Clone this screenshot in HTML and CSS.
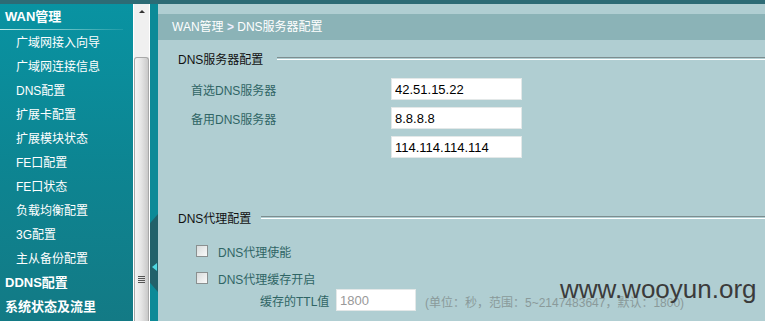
FILE: index.html
```html
<!DOCTYPE html>
<html>
<head>
  <title>DNS服务器配置</title>
  <meta name="viewport" content="width=device-width, initial-scale=1.0">
  <link rel="stylesheet" href="styles.css">
</head>
<body>
  <div class="topbar"></div>
  <div class="main">
    <div class="sidebar">
      <div class="group">WAN管理</div>
      <a class="item">广域网接入向导</a>
      <a class="item">广域网连接信息</a>
      <a class="item">DNS配置</a>
      <a class="item">扩展卡配置</a>
      <a class="item">扩展模块状态</a>
      <a class="item">FE口配置</a>
      <a class="item">FE口状态</a>
      <a class="item">负载均衡配置</a>
      <a class="item">3G配置</a>
      <a class="item">主从备份配置</a>
      <div class="group plain">DDNS配置</div>
      <div class="group plain">系统状态及流里</div>
    </div>
    <div class="scrollbar">
      <div class="arrow"></div>
      <div class="thumb"><div class="grip"></div></div>
    </div>
    <div class="strip">
      <div class="tab"><span class="tab-arrow"></span></div>
    </div>
    <div class="content">
      <div class="crumb">WAN管理 <span class="sep">&gt;</span> DNS服务器配置</div>

      <div class="section-title">DNS服务器配置</div>
      <div class="row">
        <label>首选DNS服务器</label>
        <input type="text" value="42.51.15.22">
      </div>
      <div class="row">
        <label>备用DNS服务器</label>
        <input type="text" value="8.8.8.8">
      </div>
      <div class="row">
        <label></label>
        <input type="text" value="114.114.114.114">
      </div>

      <div class="section-title second">DNS代理配置</div>
      <div class="check"><span class="box"></span>DNS代理使能</div>
      <div class="check"><span class="box"></span>DNS代理缓存开启</div>
      <div class="ttl">
        <label>缓存的TTL值</label>
        <input type="text" value="1800" disabled>
        <span class="hint">(单位：秒，范围：5~2147483647，默认：1800)</span>
      </div>

      <div class="watermark">www.wooyun.org</div>
    </div>
  </div>
</body>
</html>
```

FILE: styles.css
```css
body {
  margin: 0;
  font-family: 'Liberation Sans', 'Noto Sans CJK SC', sans-serif;
  font-size: 12px;
  overflow: hidden;
  height: 321px;
}
.topbar {
  height: 4px;
  background: #2d6b75;
}
.main {
  display: flex;
  height: 317px;
}
.sidebar {
  width: 133px;
  background: linear-gradient(180deg, #0993a2 0%, #0d8592 50%, #137a85 100%);
  color: #fff;
}
.group {
  height: 26px;
  line-height: 26px;
  padding-left: 5px;
  font-weight: bold;
  font-size: 13px;
  position: relative;
}
.group:first-child {
  margin-bottom: 1px;
}
.group:first-child::after {
  content: "";
  position: absolute;
  left: 0;
  right: 10px;
  bottom: 0;
  height: 1px;
  background: linear-gradient(90deg, rgba(210,245,240,0.9), rgba(210,245,240,0.1));
}
.group.plain {
  height: 24px;
  line-height: 24px;
}
.item {
  display: block;
  height: 24px;
  line-height: 24px;
  padding-left: 16px;
  color: #fff;
}
.scrollbar {
  width: 15px;
  background: #f0f0f0;
  border-left: 1px solid #fff;
  border-right: 1px solid #fff;
  display: flex;
  flex-direction: column;
  align-items: center;
}
.arrow {
  margin-top: 6px;
  width: 0;
  height: 0;
  border-left: 3px solid transparent;
  border-right: 3px solid transparent;
  border-bottom: 3px solid #333;
}
.thumb {
  margin-top: 44px;
  width: 15px;
  flex: 1;
  border: 1px solid #a8a8a8;
  border-bottom: none;
  border-radius: 3px 3px 0 0;
  background: linear-gradient(90deg, #f4f4f4 0%, #e6e6e6 45%, #c9c9c9 100%);
  box-sizing: border-box;
  display: flex;
  justify-content: center;
}
.grip {
  margin-top: 218px;
  width: 7px;
  height: 7px;
  background: repeating-linear-gradient(180deg, #555 0 1px, transparent 1px 2px);
}
.strip {
  width: 8px;
  background: #0c8a97;
  display: flex;
  flex-direction: column;
}
.tab {
  margin-top: 210px;
  height: 78px;
  background: #22616a;
  clip-path: polygon(100% 0, 0 12%, 0 88%, 100% 100%);
  display: flex;
  align-items: center;
  justify-content: center;
}
.tab-arrow {
  margin-top: 28px;
  width: 0;
  height: 0;
  border-top: 4px solid transparent;
  border-bottom: 4px solid transparent;
  border-right: 5px solid #4fd6e0;
}
.content {
  flex: 1;
  background: #b0ced2;
  position: relative;
}
.crumb {
  margin-top: 10px;
  height: 26px;
  line-height: 26px;
  background: #8bb3b7;
  color: #fff;
  padding-left: 14px;
}
.crumb .sep {
  font-weight: bold;
  color: #eef;
}
.section-title {
  display: flex;
  align-items: center;
  margin-top: 10px;
  padding-left: 20px;
  height: 16px;
  color: #111;
}
.section-title::after {
  content: "";
  flex: 1;
  margin-left: 14px;
  height: 1px;
  border-top: 1px solid #7d8d8f;
  border-bottom: 1px solid #fff;
}
.section-title.second {
  margin-top: 51px;
  padding-left: 20px;
}
.section-title.second::after {
  margin-left: 10px;
}
.row {
  display: flex;
  align-items: center;
  padding-left: 33px;
  height: 22px;
  margin-top: 7px;
}
.section-title + .row {
  margin-top: 12px;
}
.row label {
  width: 200px;
  color: #2f6565;
  font-size: 12px;
}
input {
  width: 131px;
  height: 22px;
  box-sizing: border-box;
  border: 1px solid #e3e8e8;
  background: #fff;
  padding: 1px 3px 0;
  font-family: 'Liberation Sans', sans-serif;
  font-size: 13px;
  color: #000;
  outline: none;
}
.check {
  display: flex;
  align-items: center;
  padding-left: 38px;
  height: 16px;
  margin-top: 11px;
  color: #2f6565;
}
.section-title.second + .check {
  margin-top: 18px;
}
.box {
  width: 10px;
  height: 10px;
  border: 1px solid #8a9090;
  background: linear-gradient(135deg, #d8dcdc, #fafafa);
  margin-right: 10px;
}
.ttl {
  display: flex;
  align-items: center;
  height: 22px;
  margin-top: 3px;
  padding-left: 102px;
  color: #2f6565;
}
.ttl label {
  width: 76px;
}
.ttl input {
  width: 80px;
  color: #999;
  background: #fff;
}
.hint {
  margin-left: 9px;
  color: #8a9a9a;
  margin-top: 3px;
}
.watermark {
  position: absolute;
  left: 402px;
  top: 270px;
  font-family: 'Liberation Sans', sans-serif;
  font-size: 26px;
  color: #3b3b3b;
}
```
